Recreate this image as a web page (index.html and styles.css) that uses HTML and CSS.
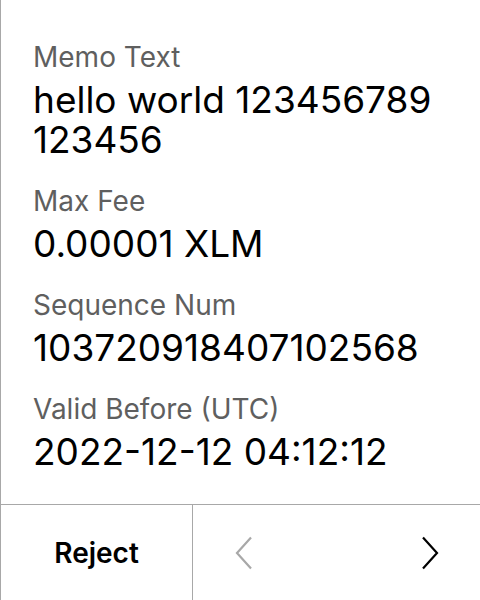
FILE: index.html
```html
<!DOCTYPE html>
<html>
<head>
<meta charset="utf-8">
<link rel="stylesheet" href="styles.css">
</head>
<body>
<div class="screen">
  <div class="content">
    <div class="field">
      <div class="label">Memo Text</div>
      <div class="value">hello world 123456789 123456</div>
    </div>
    <div class="field">
      <div class="label">Max Fee</div>
      <div class="value">0.00001 XLM</div>
    </div>
    <div class="field">
      <div class="label">Sequence Num</div>
      <div class="value">103720918407102568</div>
    </div>
    <div class="field">
      <div class="label">Valid Before (UTC)</div>
      <div class="value">2022-12-12 04:12:12</div>
    </div>
  </div>
  <div class="footer">
    <div class="reject">Reject</div>
    <div class="nav">
      <svg class="chev prev" width="18" height="34" viewBox="0 0 18 34"><path d="M16 1.5 L2 17 L16 32.5" fill="none" stroke="currentColor" stroke-width="2.2"/></svg>
      <svg class="chev next" width="18" height="34" viewBox="0 0 18 34"><path d="M2 1.5 L16 17 L2 32.5" fill="none" stroke="currentColor" stroke-width="2.2"/></svg>
    </div>
  </div>
</div>
</body>
</html>
```

FILE: styles.css
```css
html, body {
  margin: 0;
  padding: 0;
  background: #fff;
}
.screen {
  width: 480px;
  height: 600px;
  box-sizing: border-box;
  border-left: 1px solid #a8a8a8;
  display: flex;
  flex-direction: column;
  font-family: Inter, "Noto Sans", sans-serif;
}
.content {
  flex: 1;
  padding: 40px 20px 0 32px;
  display: flex;
  flex-direction: column;
  gap: 24px;
}
.label {
  font-size: 28px;
  line-height: 34px;
  color: #5f5f5f;
}
.value {
  font-size: 37px;
  line-height: 40px;
  color: #000;
  margin-top: 6px;
}
.footer {
  height: 96px;
  box-sizing: border-box;
  border-top: 1px solid #a8a8a8;
  display: flex;
}
.reject {
  width: 191px;
  border-right: 1px solid #a8a8a8;
  display: flex;
  align-items: center;
  justify-content: center;
  font-size: 28px;
  font-weight: 600;
  color: #000;
}
.nav {
  flex: 1;
  display: flex;
  align-items: center;
  justify-content: space-between;
  padding: 0 41px 0 42px;
}
.chev.prev { color: #a8a8a8; }
.chev.next { color: #000; }
```
